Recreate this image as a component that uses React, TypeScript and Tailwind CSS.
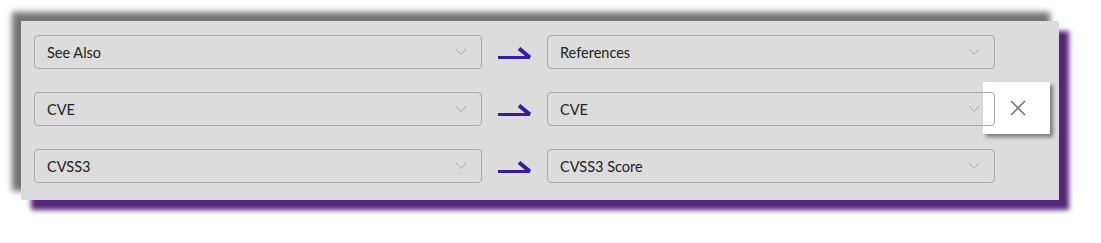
const rows = [
  { from: "See Also", to: "References", hover: false },
  { from: "CVE", to: "CVE", hover: true },
  { from: "CVSS3", to: "CVSS3 Score", hover: false },
];

function Chevron() {
  return (
    <svg width="12" height="8" viewBox="0 0 12 8" className="shrink-0">
      <path d="M1 1 L6 6.5 L11 1" fill="none" stroke="#a8a8a8" strokeWidth="1" />
    </svg>
  );
}

function Select({ value }: { value: string }) {
  return (
    <div className="relative z-10 flex h-[34px] w-[448px] items-center justify-between rounded-[4px] border border-[#a9a9a9] bg-transparent pl-3 pr-[14px]">
      <span className="pt-[2px] text-[14.5px] text-[#222]">{value}</span>
      <Chevron />
    </div>
  );
}

function Arrow() {
  return (
    <svg width="34" height="14" viewBox="0 0 34 14" className="ml-[16px] mr-[15px] mt-[4px] shrink-0">
      <path d="M0 10.5 H32" stroke="#391c9c" strokeWidth="3" fill="none" />
      <path d="M21 1.5 L32 10.5" stroke="#391c9c" strokeWidth="4" fill="none" strokeLinecap="butt" />
    </svg>
  );
}

export default function App() {
  return (
    <div className="h-[243px] w-[1101px] bg-white pl-[21px] pt-[21px] font-['Lato','Liberation_Sans',sans-serif]">
      <div className="flex h-[179px] w-[1038px] flex-col gap-[23px] bg-[#dcdcdc] pl-[13px] pt-[14px] shadow-[-9px_-9px_6px_rgba(0,0,0,0.55),10px_10px_5px_#54257a]">
        {rows.map((r) => (
          <div key={r.from} className="relative flex items-center">
            <Select value={r.from} />
            <Arrow />
            <Select value={r.to} />
            {r.hover && (
              <div className="absolute left-[949px] top-[-10px] z-0 flex h-[52px] w-[67px] items-center justify-end bg-white pr-[24px] shadow-[3px_3px_4px_rgba(0,0,0,0.45)]">
                <svg width="16" height="16" viewBox="0 0 16 16">
                  <path d="M1 1 L15 15 M15 1 L1 15" stroke="#7a7a7a" strokeWidth="1.6" fill="none" />
                </svg>
              </div>
            )}
          </div>
        ))}
      </div>
    </div>
  );
}
